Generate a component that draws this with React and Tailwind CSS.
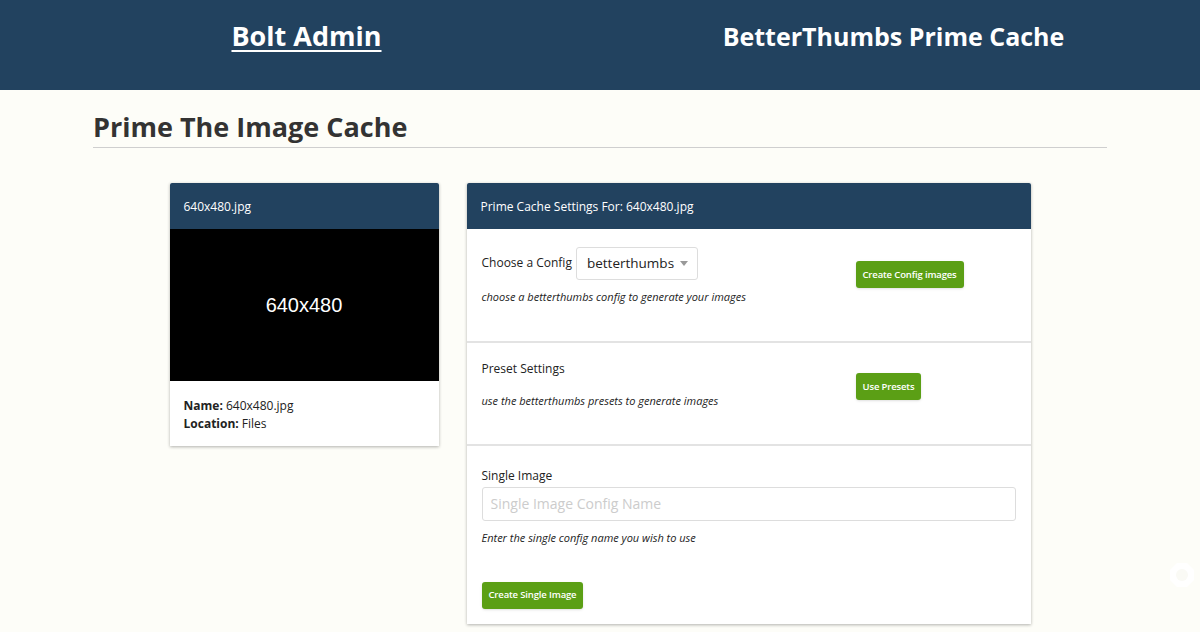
const font = { fontFamily: '"Open Sans", "Noto Sans", sans-serif' };

const CardHeader = ({ children }) => (
  <div className="h-[46px] bg-[#22425f] text-white text-[12px] flex items-center px-[14px] pt-[3px] rounded-t-[2px]">
    {children}
  </div>
);

const GreenButton = ({ children }) => (
  <button className="h-[27px] px-[7px] rounded-[3px] bg-[#5b9f15] text-white text-[9.5px] font-semibold tracking-[-0.15px] shadow-sm">
    {children}
  </button>
);

const App = () => {
  return (
    <div className="min-h-screen bg-[#fdfdf8] text-[#222] relative" style={font}>
      {/* Top bar */}
      <header className="h-[90px] bg-[#22425f] flex px-[13px] text-white">
        <div className="flex-1 flex justify-center pt-[16px]">
          <a href="#" className="text-[27px] font-bold underline underline-offset-[4px] decoration-2 h-fit">
            Bolt Admin
          </a>
        </div>
        <div className="flex-1 flex justify-center pt-[18px]">
          <h1 className="text-[25px] font-bold h-fit">BetterThumbs Prime Cache</h1>
        </div>
      </header>

      {/* Page */}
      <div className="mx-[93px]">
        <h2 className="text-[27px] leading-tight font-bold text-[#333] pt-[20px] pb-[3px] border-b border-[#cfcfcf]">
          Prime The Image Cache
        </h2>

        <div className="flex justify-center gap-[28px] mt-[35px]">
          {/* Image card */}
          <div className="w-[269px] bg-white shadow-[0_1px_3px_rgba(0,0,0,0.3)] self-start">
            <CardHeader>640x480.jpg</CardHeader>
            <div className="h-[152px] bg-black flex items-center justify-center">
              <span className="text-white text-[20px]" style={{ fontFamily: '"Liberation Sans", Arial, sans-serif' }}>
                640x480
              </span>
            </div>
            <div className="px-[14px] pt-[16px] pb-[13px] text-[12px] leading-[18px]">
              <div><b>Name:</b> 640x480.jpg</div>
              <div><b>Location:</b> Files</div>
            </div>
          </div>

          {/* Settings card */}
          <div className="w-[564px] bg-white shadow-[0_1px_3px_rgba(0,0,0,0.3)] self-start">
            <CardHeader>Prime Cache Settings For: 640x480.jpg</CardHeader>

            <div className="h-[114px] px-[15px] flex border-b-2 border-[#e3e3e3]">
              <div className="w-[374px] pt-[18px]">
                <div className="flex items-center gap-[4px] text-[12px]">
                  <span>Choose a Config</span>
                  <div className="w-[122px] h-[33px] border border-[#ddd] rounded-[3px] flex items-center justify-between pl-[10px] pr-[9px]">
                    <span className="text-[13.5px]">betterthumbs</span>
                    <svg width="8" height="5" viewBox="0 0 8 5"><path d="M0 0h8L4 5z" fill="#999" /></svg>
                  </div>
                </div>
                <p className="italic text-[11px] mt-[9px]">choose a betterthumbs config to generate your images</p>
              </div>
              <div className="pt-[31px]">
                <GreenButton>Create Config images</GreenButton>
              </div>
            </div>

            <div className="h-[103px] px-[15px] flex border-b-2 border-[#e3e3e3]">
              <div className="w-[374px] pt-[17px]">
                <div className="text-[12px]">Preset Settings</div>
                <p className="italic text-[11px] mt-[15px]">use the betterthumbs presets to generate images</p>
              </div>
              <div className="pt-[29px]">
                <GreenButton>Use Presets</GreenButton>
              </div>
            </div>

            <div className="px-[15px] pt-[21px] pb-[15px]">
              <div className="text-[12px]">Single Image</div>
              <input
                className="mt-[2px] w-full h-[34px] border border-[#ddd] rounded-[3px] px-[8px] text-[14px] placeholder:text-[#ccc] outline-none"
                placeholder="Single Image Config Name"
              />
              <p className="italic text-[11px] mt-[9px]">Enter the single config name you wish to use</p>
              <div className="mt-[34px]">
                <GreenButton>Create Single Image</GreenButton>
              </div>
            </div>
          </div>
        </div>
      </div>

      {/* faint floating widget */}
      <svg className="absolute left-[1169px] top-[562px]" width="26" height="26" viewBox="0 0 26 26">
        <polygon points="8,1 18,1 25,8 25,18 18,25 8,25 1,18 1,8" fill="#ffffff" />
        <circle cx="13" cy="13" r="6" fill="#fafaf5" />
      </svg>
    </div>
  );
};

export default App;
